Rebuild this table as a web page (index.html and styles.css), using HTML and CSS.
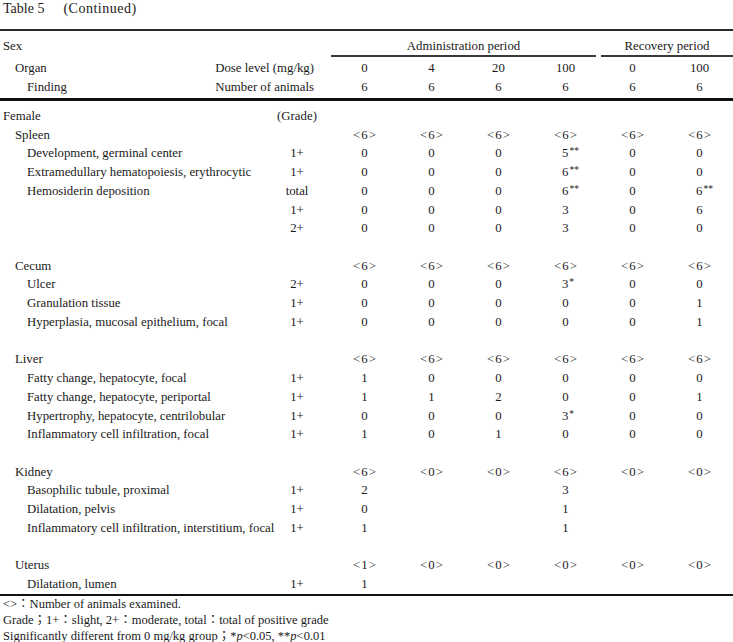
FILE: index.html
```html
<!DOCTYPE html>
<html lang="en">
<head>
<meta charset="utf-8">
<title>Table 5 (Continued)</title>
<link rel="stylesheet" href="styles.css">
</head>
<body>
<div class="page">
  <div class="title">Table 5<span class="gap"></span><span class="cont">(Continued)</span></div>
  <table class="tbl">
    <colgroup>
      <col class="c-label"><col class="c-grade">
      <col class="c-num"><col class="c-num"><col class="c-num"><col class="c-num"><col class="c-num"><col class="c-num">
    </colgroup>
    <thead>
      <tr class="h1">
        <th class="lab" colspan="2"><span class="l0">Sex</span></th>
        <th colspan="4"><div class="period adm">Administration period</div></th>
        <th colspan="2"><div class="period rec">Recovery period</div></th>
      </tr>
      <tr class="h2">
        <th class="lab" colspan="2"><div class="split"><span class="l1">Organ</span><span>Dose level (mg/kg)</span></div></th>
        <td>0</td><td>4</td><td>20</td><td>100</td><td>0</td><td>100</td>
      </tr>
      <tr class="h3">
        <th class="lab" colspan="2"><div class="split"><span class="l2">Finding</span><span>Number of animals</span></div></th>
        <td>6</td><td>6</td><td>6</td><td>6</td><td>6</td><td>6</td>
      </tr>
    </thead>
    <tbody>
      <tr class="first"><td class="l0">Female</td><td>(Grade)</td><td></td><td></td><td></td><td></td><td></td><td></td></tr>
      <tr class="organ"><td class="l1">Spleen</td><td></td><td>&lt;6&gt;</td><td>&lt;6&gt;</td><td>&lt;6&gt;</td><td>&lt;6&gt;</td><td>&lt;6&gt;</td><td>&lt;6&gt;</td></tr>
      <tr><td class="l2">Development, germinal center</td><td>1+</td><td>0</td><td>0</td><td>0</td><td>5<sup class="sig">**</sup></td><td>0</td><td>0</td></tr>
      <tr><td class="l2">Extramedullary hematopoiesis, erythrocytic</td><td>1+</td><td>0</td><td>0</td><td>0</td><td>6<sup class="sig">**</sup></td><td>0</td><td>0</td></tr>
      <tr><td class="l2">Hemosiderin deposition</td><td>total</td><td>0</td><td>0</td><td>0</td><td>6<sup class="sig">**</sup></td><td>0</td><td>6<sup class="sig">**</sup></td></tr>
      <tr><td class="l2"></td><td>1+</td><td>0</td><td>0</td><td>0</td><td>3</td><td>0</td><td>6</td></tr>
      <tr><td class="l2"></td><td>2+</td><td>0</td><td>0</td><td>0</td><td>3</td><td>0</td><td>0</td></tr>
      <tr class="blank"><td class="l2"></td><td></td><td></td><td></td><td></td><td></td><td></td><td></td></tr>
      <tr class="organ"><td class="l1">Cecum</td><td></td><td>&lt;6&gt;</td><td>&lt;6&gt;</td><td>&lt;6&gt;</td><td>&lt;6&gt;</td><td>&lt;6&gt;</td><td>&lt;6&gt;</td></tr>
      <tr><td class="l2">Ulcer</td><td>2+</td><td>0</td><td>0</td><td>0</td><td>3<sup class="sig s1">*</sup></td><td>0</td><td>0</td></tr>
      <tr><td class="l2">Granulation tissue</td><td>1+</td><td>0</td><td>0</td><td>0</td><td>0</td><td>0</td><td>1</td></tr>
      <tr><td class="l2">Hyperplasia, mucosal epithelium, focal</td><td>1+</td><td>0</td><td>0</td><td>0</td><td>0</td><td>0</td><td>1</td></tr>
      <tr class="blank"><td class="l2"></td><td></td><td></td><td></td><td></td><td></td><td></td><td></td></tr>
      <tr class="organ"><td class="l1">Liver</td><td></td><td>&lt;6&gt;</td><td>&lt;6&gt;</td><td>&lt;6&gt;</td><td>&lt;6&gt;</td><td>&lt;6&gt;</td><td>&lt;6&gt;</td></tr>
      <tr><td class="l2">Fatty change, hepatocyte, focal</td><td>1+</td><td>1</td><td>0</td><td>0</td><td>0</td><td>0</td><td>0</td></tr>
      <tr><td class="l2">Fatty change, hepatocyte, periportal</td><td>1+</td><td>1</td><td>1</td><td>2</td><td>0</td><td>0</td><td>1</td></tr>
      <tr><td class="l2">Hypertrophy, hepatocyte, centrilobular</td><td>1+</td><td>0</td><td>0</td><td>0</td><td>3<sup class="sig s1">*</sup></td><td>0</td><td>0</td></tr>
      <tr><td class="l2">Inflammatory cell infiltration, focal</td><td>1+</td><td>1</td><td>0</td><td>1</td><td>0</td><td>0</td><td>0</td></tr>
      <tr class="blank"><td class="l2"></td><td></td><td></td><td></td><td></td><td></td><td></td><td></td></tr>
      <tr class="organ"><td class="l1">Kidney</td><td></td><td>&lt;6&gt;</td><td>&lt;0&gt;</td><td>&lt;0&gt;</td><td>&lt;6&gt;</td><td>&lt;0&gt;</td><td>&lt;0&gt;</td></tr>
      <tr><td class="l2">Basophilic tubule, proximal</td><td>1+</td><td>2</td><td></td><td></td><td>3</td><td></td><td></td></tr>
      <tr><td class="l2">Dilatation, pelvis</td><td>1+</td><td>0</td><td></td><td></td><td>1</td><td></td><td></td></tr>
      <tr><td class="l2">Inflammatory cell infiltration, interstitium, focal</td><td>1+</td><td>1</td><td></td><td></td><td>1</td><td></td><td></td></tr>
      <tr class="blank"><td class="l2"></td><td></td><td></td><td></td><td></td><td></td><td></td><td></td></tr>
      <tr class="organ"><td class="l1">Uterus</td><td></td><td>&lt;1&gt;</td><td>&lt;0&gt;</td><td>&lt;0&gt;</td><td>&lt;0&gt;</td><td>&lt;0&gt;</td><td>&lt;0&gt;</td></tr>
      <tr class="last"><td class="l2">Dilatation, lumen</td><td>1+</td><td>1</td><td></td><td></td><td></td><td></td><td></td></tr>
    </tbody>
  </table>
  <div class="notes">
    <div>&lt;&gt;：Number of animals examined.</div>
    <div>Grade；1+：slight, 2+：moderate, total：total of positive grade</div>
    <div>Significantly different from 0 mg/kg group；*<i>p</i>&lt;0.05, **<i>p</i>&lt;0.01</div>
  </div>
</div>
</body>
</html>
```

FILE: styles.css
```css
html, body {
  margin: 0;
  padding: 0;
  background: #ffffff;
}

.page {
  width: 733px;
  font-family: "Liberation Serif", "Noto Sans CJK JP", serif;
  font-size: 12.8px;
  color: #1a1a1a;
}

.title {
  font-size: 14px;
  line-height: 18px;
  height: 29px;
  padding-left: 3px;
}

.title .gap {
  display: inline-block;
  width: 19px;
}

.title .cont {
  letter-spacing: 0.5px;
}

.tbl {
  width: 733px;
  table-layout: fixed;
  border-collapse: separate;
  border-spacing: 0;
  border-top: 2px solid #2a2a2a;
}

.c-label { width: 263px; }
.c-grade { width: 68px; }
.c-num { width: 67px; }

.tbl th,
.tbl td {
  padding: 0;
  font-weight: normal;
  text-align: center;
  white-space: nowrap;
  overflow: visible;
  line-height: 18.72px;
}

.tbl tbody tr {
  height: 18.72px;
}

.tbl tbody tr.first {
  height: 24.72px;
}

.tbl tr.organ td {
  letter-spacing: 1px;
  text-indent: 1px;
}

.tbl tr.organ td.l1 {
  letter-spacing: 0;
  text-indent: 0;
}

.tbl th.lab,
.tbl td.l0,
.tbl td.l1,
.tbl td.l2 {
  text-align: left;
}

.l0 { padding-left: 3px !important; }
.l1 { padding-left: 15px !important; }
.l2 { padding-left: 27px !important; }

.tbl th .l0 { display: inline-block; padding-left: 3px; }

.h1 th {
  padding-top: 7px;
  line-height: 16px;
  vertical-align: top;
}

.period {
  padding-bottom: 1px;
  border-bottom: 2px solid #3a3a3a;
}

.period.adm { margin-right: 3px; }
.period.rec { margin-left: 2px; }

.h2 th, .h2 td {
  padding-top: 2px;
  line-height: 19px;
}

.h3 th, .h3 td {
  line-height: 19px;
  padding-bottom: 1px;
  border-bottom: 3px solid #111;
}

.split {
  display: flex;
  justify-content: space-between;
  padding-right: 17px;
}

.split .l1 { padding-left: 15px; }
.split .l2 { padding-left: 27px; }

.first td { padding-top: 6px; }

.last td { border-bottom: 2px solid #111; }

.sig {
  font-size: 9.5px;
  line-height: 0;
  vertical-align: 3px;
  margin-right: -10px;
  padding-left: 1px;
}

.sig.s1 { margin-right: -5px; }

.notes {
  line-height: 16px;
  padding-left: 3px;
  font-size: 12.5px;
}

.notes i { font-style: italic; }
```
